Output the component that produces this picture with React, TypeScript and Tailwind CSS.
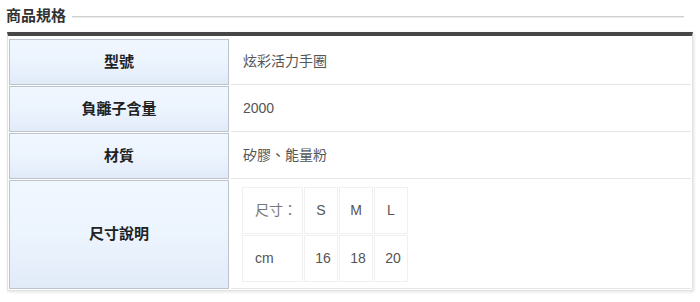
const specs = [
  { label: '型號', value: '炫彩活力手圈' },
  { label: '負離子含量', value: '2000' },
  { label: '材質', value: '矽膠、能量粉' },
];

const sizes = [
  { name: 'S', cm: '16' },
  { name: 'M', cm: '18' },
  { name: 'L', cm: '20' },
];

function LabelCell({ children }: { children: React.ReactNode }) {
  return (
    <div className="w-[220px] shrink-0 flex items-center justify-center border border-[#bcc3cc] bg-gradient-to-b from-[#f1f7ff] via-[#ecf4fe] to-[#e1ebf8] text-[15px] font-bold text-[#222]">
      {children}
    </div>
  );
}

export default function App() {
  return (
    <div
      className="w-[700px] h-[302px] bg-white"
      style={{ fontFamily: '"Liberation Sans", "Noto Sans CJK TC", sans-serif' }}
    >
      <div className="flex items-center pl-[6px] pt-[6px] pr-[16px]">
        <h2 className="text-[15px] font-bold text-[#333] leading-[20px]">商品規格</h2>
        <div className="flex-1 h-px ml-[6px] mt-[1px] bg-[#cfcfcf] shadow-[0_1px_0_#ececec]" />
      </div>

      <div className="mx-[7px] mt-[6px] border-t-4 border-t-[#464646] border-x border-b border-x-[#e2e2e2] border-b-[#e2e2e2] shadow-[1px_1px_3px_rgba(0,0,0,0.12)] pl-px pr-px pt-[3px] pb-[1px] flex flex-col gap-px">
        {specs.map((row) => (
          <div key={row.label} className="flex h-[46px]">
            <LabelCell>{row.label}</LabelCell>
            <div className="flex-1 flex items-center pl-[12px] ml-[2px] border-b border-[#e6e6e6] text-[14px] text-[#555]">
              {row.value}
            </div>
          </div>
        ))}

        <div className="flex h-[109px]">
          <LabelCell>尺寸說明</LabelCell>
          <div className="flex-1 ml-[2px] pl-[10px] pt-[6px] border-b border-[#e6e6e6]">
            <table className="border-separate border-spacing-[1px] text-[14px] text-[#555]">
              <tbody>
                <tr>
                  <td className="w-[61px] h-[47px] pl-[12px] border border-[#f0f0f0] text-[#777]">尺寸：</td>
                  {sizes.map((s) => (
                    <td key={s.name} className="w-[34px] h-[47px] text-center border border-[#f0f0f0]">
                      {s.name}
                    </td>
                  ))}
                </tr>
                <tr>
                  <td className="w-[61px] h-[47px] pl-[12px] border border-[#f0f0f0]">cm</td>
                  {sizes.map((s) => (
                    <td key={s.name} className="w-[34px] h-[47px] text-center pl-[4px] border border-[#f0f0f0]">
                      {s.cm}
                    </td>
                  ))}
                </tr>
              </tbody>
            </table>
          </div>
        </div>
      </div>
    </div>
  );
}
